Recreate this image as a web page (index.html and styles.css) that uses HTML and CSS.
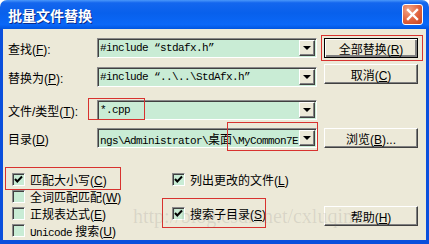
FILE: index.html
```html
<!DOCTYPE html>
<html lang="zh-CN">
<head>
  <meta charset="UTF-8">
  <title>批量文件替换</title>
  <link rel="stylesheet" href="styles.css">
</head>
<body>
<div class="window">
  <div class="titlebar">
    <span class="title">批量文件替换</span>
    <span class="close">
      <svg width="13" height="13" viewBox="0 0 13 13"><path d="M2 2 L11 11 M11 2 L2 11" stroke="#fff" stroke-width="2.4" stroke-linecap="square"/></svg>
    </span>
  </div>

  <div class="content">
    <div class="row">
      <span class="label">查找(<u>F</u>):</span>
      <div class="combo">
        <span class="combo-text">#include “stdafx.h”</span>
        <span class="arrow"></span>
      </div>
      <button class="btn btn-default">全部替换(<u>R</u>)</button>
    </div>
    <div class="row row-2">
      <span class="label">替换为(<u>P</u>):</span>
      <div class="combo">
        <span class="combo-text">#include “..\..\StdAfx.h”</span>
        <span class="arrow"></span>
      </div>
      <button class="btn btn-cancel">取消(<u>C</u>)</button>
    </div>
    <div class="row row-3">
      <span class="label">文件/类型(<u>T</u>):</span>
      <div class="combo">
        <span class="combo-text">*.cpp</span>
        <span class="arrow"></span>
      </div>
    </div>
    <div class="row row-4">
      <span class="label">目录(<u>D</u>)</span>
      <div class="combo">
        <span class="combo-text">ngs\Administrator\<span class="cjk">桌面</span>\MyCommon7E</span>
        <span class="arrow"></span>
      </div>
      <button class="btn">浏览(<u>B</u>)...</button>
    </div>

    <div class="options">
      <label class="check"><span class="box"><svg width="9" height="9" viewBox="0 0 9 9"><path d="M1 4 L3.3 6.5 L8 1.5" fill="none" stroke="#000" stroke-width="2"/></svg></span><span>匹配大小写(<u>C</u>)</span></label>
      <label class="check"><span class="box"><svg width="9" height="9" viewBox="0 0 9 9"><path d="M1 4 L3.3 6.5 L8 1.5" fill="none" stroke="#000" stroke-width="2"/></svg></span><span>列出更改的文件(<u>L</u>)</span></label>
      <span></span>
      <label class="check"><span class="box"></span><span>全词匹配匹配(<u>W</u>)</span></label>
      <span></span>
      <span></span>
      <label class="check"><span class="box"></span><span>正规表达式(<u>E</u>)</span></label>
      <label class="check"><span class="box"><svg width="9" height="9" viewBox="0 0 9 9"><path d="M1 4 L3.3 6.5 L8 1.5" fill="none" stroke="#000" stroke-width="2"/></svg></span><span>搜索子目录(<u>S</u>)</span></label>
      <button class="btn btn-help">帮助(<u>H</u>)</button>
      <label class="check"><span class="box"></span><span><span class="mono">Unicode</span> 搜索(<u>U</u>)</span></label>
    </div>
  </div>

  <!-- annotation boxes -->
  <div class="mark mark-replace"></div>
  <div class="mark mark-type"></div>
  <div class="mark mark-dir"></div>
  <div class="mark mark-case"></div>
  <div class="mark mark-sub"></div>

  <div class="watermark">http://blog.csdn.net/cxluqima</div>
</div>
</body>
</html>
```

FILE: styles.css
```css
body {
  margin: 0;
  background: #ffffff;
  font-family: "Liberation Sans", "Noto Sans CJK SC", sans-serif;
  font-size: 12px;
  color: #000;
}
.window {
  position: relative;
  width: 429px;
  height: 244px;
  display: flex;
  flex-direction: column;
  background: #ECE9D8;
  border-radius: 7px 7px 0 0;
  overflow: hidden;
}
.titlebar {
  flex: none;
  height: 29px;
  display: flex;
  align-items: center;
  padding: 0 6px 0 8px;
  background: linear-gradient(to bottom, #4a97fa 0%, #1466ee 10%, #0860ec 45%, #0a68f8 85%, #0055e0 100%);
}
.title {
  flex: 1;
  color: #fff;
  font-family: "Noto Sans CJK SC", sans-serif;
  font-weight: bold;
  font-size: 14px;
  text-shadow: 1px 1px #0b2c8c;
}
.close {
  width: 21px;
  height: 21px;
  box-sizing: border-box;
  border: 1px solid #fff;
  border-radius: 3px;
  background: radial-gradient(circle at 30% 25%, #f2a587, #e0623d 55%, #c5421f);
  display: flex;
  align-items: center;
  justify-content: center;
}
.content {
  flex: 1;
  border: solid #0a4fdc;
  border-width: 0 3px 4px 3px;
  padding: 9px 0 0 5px;
}
.row {
  display: flex;
  align-items: center;
  height: 20px;
}
.row-2 { margin-top: 9px; }
.row-3 { margin-top: 13px; }
.row-4 { margin-top: 8px; }
.label {
  width: 89px;
  flex: none;
  white-space: nowrap;
}
.combo {
  width: 220px;
  height: 20px;
  box-sizing: border-box;
  display: flex;
  align-items: center;
  background: #c9ecd5;
  border: 1px solid;
  border-color: #8a8a8a #ffffff #ffffff #8a8a8a;
  box-shadow: inset 1px 1px #404040;
  padding: 1px 1px 1px 2px;
}
.combo-text {
  flex: 1;
  overflow: hidden;
  white-space: nowrap;
  font-family: "Liberation Mono", monospace;
  font-size: 11px;
  letter-spacing: -0.6px;
}
.cjk {
  font-family: "Noto Sans CJK SC", sans-serif;
  font-size: 12px;
  letter-spacing: 0;
}
.arrow {
  width: 16px;
  height: 16px;
  box-sizing: border-box;
  flex: none;
  background: #ECE9D8;
  border: 1px solid;
  border-color: #ffffff #404040 #404040 #ffffff;
  box-shadow: inset -1px -1px #808080;
  display: flex;
  align-items: center;
  justify-content: center;
}
.arrow::after {
  content: "";
  border-left: 4px solid transparent;
  border-right: 4px solid transparent;
  border-top: 4px solid #000;
}
.btn {
  width: 94px;
  height: 20px;
  margin-left: 7px;
  box-sizing: border-box;
  padding: 0;
  background: #ECE9D8;
  font-family: "Liberation Sans", "Noto Sans CJK SC", sans-serif;
  font-size: 12px;
  color: #000;
  border: 1px solid;
  border-color: #ffffff #404040 #404040 #ffffff;
  box-shadow: inset -1px -1px #808080;
}
.btn-default {
  border: 1px solid #000;
  box-shadow: inset 1px 1px #fff, inset -2px -2px #808080;
}
.btn-cancel { margin-top: -6px; }
.options {
  display: grid;
  grid-template-columns: 160px 152px 94px;
  grid-template-rows: repeat(4, 17px);
  margin-top: 23px;
  padding-left: 4px;
}
.check {
  display: flex;
  align-items: center;
  gap: 5px;
  white-space: nowrap;
}
.box {
  width: 13px;
  height: 13px;
  box-sizing: border-box;
  flex: none;
  background: #c9ecd5;
  border: 1px solid;
  border-color: #8a8a8a #ffffff #ffffff #8a8a8a;
  box-shadow: inset 1px 1px #404040;
  display: flex;
  align-items: center;
  justify-content: center;
}
.mono {
  font-family: "Liberation Mono", monospace;
  font-size: 11px;
  letter-spacing: -0.6px;
}
.btn-help {
  margin: 1px 0 0 0;
  align-self: start;
}
.mark {
  position: absolute;
  border: 1px solid #d8322f;
  pointer-events: none;
}
.mark-replace { left: 321px; top: 35px; width: 100px; height: 24px; }
.mark-type { left: 88px; top: 98px; width: 55px; height: 20px; }
.mark-dir { left: 227px; top: 122px; width: 89px; height: 27px; }
.mark-case { left: 5px; top: 167px; width: 114px; height: 21px; }
.mark-sub { left: 162px; top: 198px; width: 102px; height: 28px; }
.watermark {
  position: absolute;
  left: 133px;
  top: 205px;
  font-family: "Liberation Serif", serif;
  font-size: 20px;
  color: rgba(110, 110, 110, 0.16);
  pointer-events: none;
  white-space: nowrap;
}
```
